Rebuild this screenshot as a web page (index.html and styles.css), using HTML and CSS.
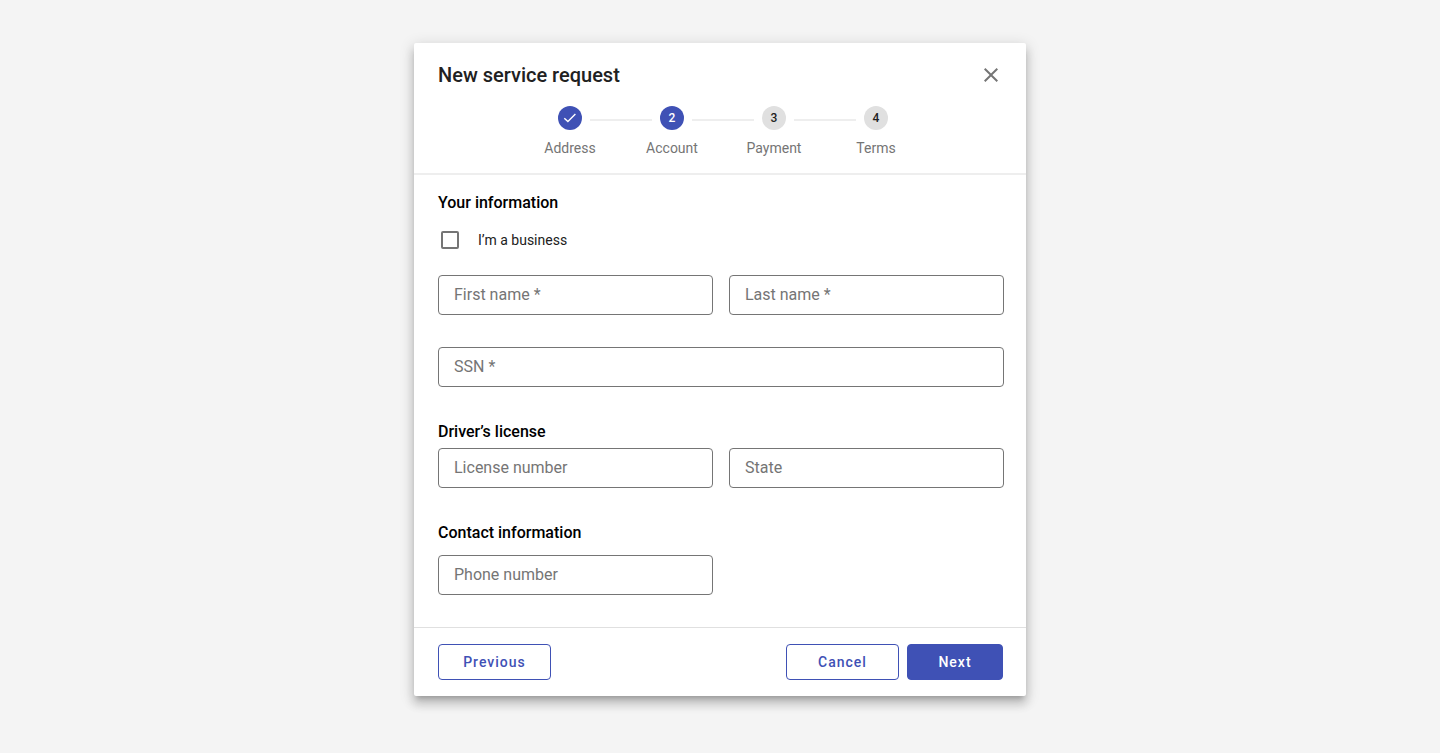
FILE: index.html
```html
<!DOCTYPE html>
<html lang="en">
<head>
  <meta charset="UTF-8">
  <meta name="viewport" content="width=device-width, initial-scale=1">
  <title>New service request</title>
  <link rel="stylesheet" href="styles.css">
</head>
<body>
  <main class="dialog" role="dialog" aria-labelledby="dialog-title">
    <header class="dialog-header">
      <div class="title-row">
        <h1 id="dialog-title">New service request</h1>
        <button type="button" class="close-btn" aria-label="Close">
          <svg viewBox="0 0 24 24" width="24" height="24">
            <path d="M19 6.41 17.59 5 12 10.59 6.41 5 5 6.41 10.59 12 5 17.59 6.41 19 12 13.41 17.59 19 19 17.59 13.41 12z" fill="currentColor"/>
          </svg>
        </button>
      </div>

      <ol class="stepper">
        <li class="step done">
          <span class="step-circle">
            <svg viewBox="0 0 24 24" width="24" height="24">
              <path d="M6.3 12.2 9.9 15.6 17.4 8" fill="none" stroke="currentColor" stroke-width="1.4"/>
            </svg>
          </span>
          <span class="step-label">Address</span>
        </li>
        <li class="step current" aria-current="step">
          <span class="step-circle">2</span>
          <span class="step-label">Account</span>
        </li>
        <li class="step">
          <span class="step-circle">3</span>
          <span class="step-label">Payment</span>
        </li>
        <li class="step">
          <span class="step-circle">4</span>
          <span class="step-label">Terms</span>
        </li>
      </ol>
    </header>

    <form id="request-form" class="dialog-body">
      <section>
        <h2>Your information</h2>
        <div class="check-row">
          <input type="checkbox" id="business">
          <label for="business">I’m a business</label>
        </div>
        <div class="form-row">
          <div class="field">
            <input type="text" id="first-name" placeholder=" " required>
            <label for="first-name">First name *</label>
          </div>
          <div class="field">
            <input type="text" id="last-name" placeholder=" " required>
            <label for="last-name">Last name *</label>
          </div>
        </div>
        <div class="field">
          <input type="text" id="ssn" placeholder=" " required>
          <label for="ssn">SSN *</label>
        </div>
      </section>

      <section>
        <h2 class="tight">Driver’s license</h2>
        <div class="form-row">
          <div class="field">
            <input type="text" id="license" placeholder=" ">
            <label for="license">License number</label>
          </div>
          <div class="field">
            <input type="text" id="state" placeholder=" ">
            <label for="state">State</label>
          </div>
        </div>
      </section>

      <section>
        <h2>Contact information</h2>
        <div class="form-row">
          <div class="field">
            <input type="tel" id="phone" placeholder=" ">
            <label for="phone">Phone number</label>
          </div>
        </div>
      </section>
    </form>

    <footer class="dialog-footer">
      <button type="button" class="btn">Previous</button>
      <div class="footer-right">
        <button type="button" class="btn">Cancel</button>
        <button type="submit" form="request-form" class="btn btn-primary">Next</button>
      </div>
    </footer>
  </main>
</body>
</html>
```

FILE: styles.css
```css
* {
  box-sizing: border-box;
}

body {
  margin: 0;
  padding: 43px 16px;
  font-family: Roboto, "Liberation Sans", sans-serif;
  color: #212121;
  background-color: #f4f4f4;
}

.dialog {
  max-width: 612px;
  margin: 0 auto;
  background-color: #fff;
  border-radius: 2px;
  box-shadow: 0 5px 5px -3px rgba(0, 0, 0, 0.2),
    0 8px 10px 1px rgba(0, 0, 0, 0.14),
    0 3px 14px 2px rgba(0, 0, 0, 0.12);
}

.dialog-header {
  padding: 20px 23px 15px 24px;
  border-bottom: 2px solid #eee;
}

.title-row {
  display: flex;
  align-items: center;
  justify-content: space-between;
  margin-bottom: 19px;
}

h1 {
  margin: 0;
  font-size: 20px;
  font-weight: 500;
  line-height: 24px;
}

.close-btn {
  display: flex;
  padding: 0;
  border: none;
  background: none;
  color: #757575;
  cursor: pointer;
}

/* stepper */
.stepper {
  display: flex;
  justify-content: center;
  gap: 62px;
  margin: 0;
  padding: 0 0 0 5px;
  list-style: none;
}

.step {
  position: relative;
  display: flex;
  flex-direction: column;
  align-items: center;
  gap: 8px;
  width: 40px;
}

/* line to the next step */
.step:not(:last-child)::after {
  content: "";
  position: absolute;
  top: 13px;
  left: 100%;
  width: 62px;
  height: 2px;
  background-color: #eee;
}

.step-circle {
  display: flex;
  align-items: center;
  justify-content: center;
  width: 24px;
  height: 24px;
  border-radius: 50%;
  background-color: #e0e0e0;
  font-size: 12px;
  font-weight: 500;
}

.done .step-circle,
.current .step-circle {
  background-color: #3f51b5;
  color: #fff;
}

.step-label {
  font-size: 14px;
  line-height: 20px;
  color: #757575;
}

/* form */
.dialog-body {
  padding: 15px 22px 0 24px;
}

h2 {
  margin: 0 0 9px;
  font-size: 16px;
  font-weight: 500;
  line-height: 26px;
  color: #000;
}

h2.tight {
  margin-bottom: 3px;
}

.check-row {
  display: flex;
  align-items: center;
  gap: 16px;
  margin: 12px 0 23px;
  font-size: 14px;
  line-height: 24px;
}

.check-row input {
  appearance: none;
  width: 18px;
  height: 18px;
  margin: 0 3px;
  border: 2px solid #757575;
  border-radius: 2px;
  background-color: #fff;
}

.check-row input:checked {
  border-color: #3f51b5;
  background-color: #3f51b5;
}

.form-row {
  display: grid;
  grid-template-columns: 1fr 1fr;
  gap: 0 16px;
}

.field {
  position: relative;
  margin-bottom: 32px;
}

.field input {
  display: block;
  width: 100%;
  height: 40px;
  padding: 0 15px;
  border: 1px solid #757575;
  border-radius: 4px;
  background-color: #fff;
  font-family: inherit;
  font-size: 16px;
  color: #212121;
}

/* label lies in the empty box and moves to the border when it is filled */
.field label {
  position: absolute;
  top: 8px;
  left: 16px;
  font-size: 16px;
  line-height: 24px;
  color: #757575;
  pointer-events: none;
}

.field input:focus {
  border-color: #3f51b5;
  outline: none;
}

.field input:focus + label,
.field input:not(:placeholder-shown) + label {
  top: -8px;
  left: 12px;
  padding: 0 4px;
  background-color: #fff;
  font-size: 12px;
  line-height: 16px;
}

/* footer */
.dialog-footer {
  display: flex;
  justify-content: space-between;
  padding: 16px 23px 16px 24px;
  border-top: 1px solid #e0e0e0;
}

.footer-right {
  display: flex;
  gap: 8px;
}

.btn {
  min-width: 113px;
  height: 36px;
  padding: 0 16px;
  border: 1px solid #3f51b5;
  border-radius: 4px;
  background-color: #fff;
  color: #3f51b5;
  font-family: inherit;
  font-size: 14px;
  font-weight: 500;
  letter-spacing: 1px;
  cursor: pointer;
}

.btn-primary {
  min-width: 96px;
  background-color: #3f51b5;
  color: #fff;
}

@media (max-width: 600px) {
  .form-row {
    grid-template-columns: 1fr;
  }

  .stepper {
    gap: 32px;
  }

  .step:not(:last-child)::after {
    width: 32px;
  }
}
```
